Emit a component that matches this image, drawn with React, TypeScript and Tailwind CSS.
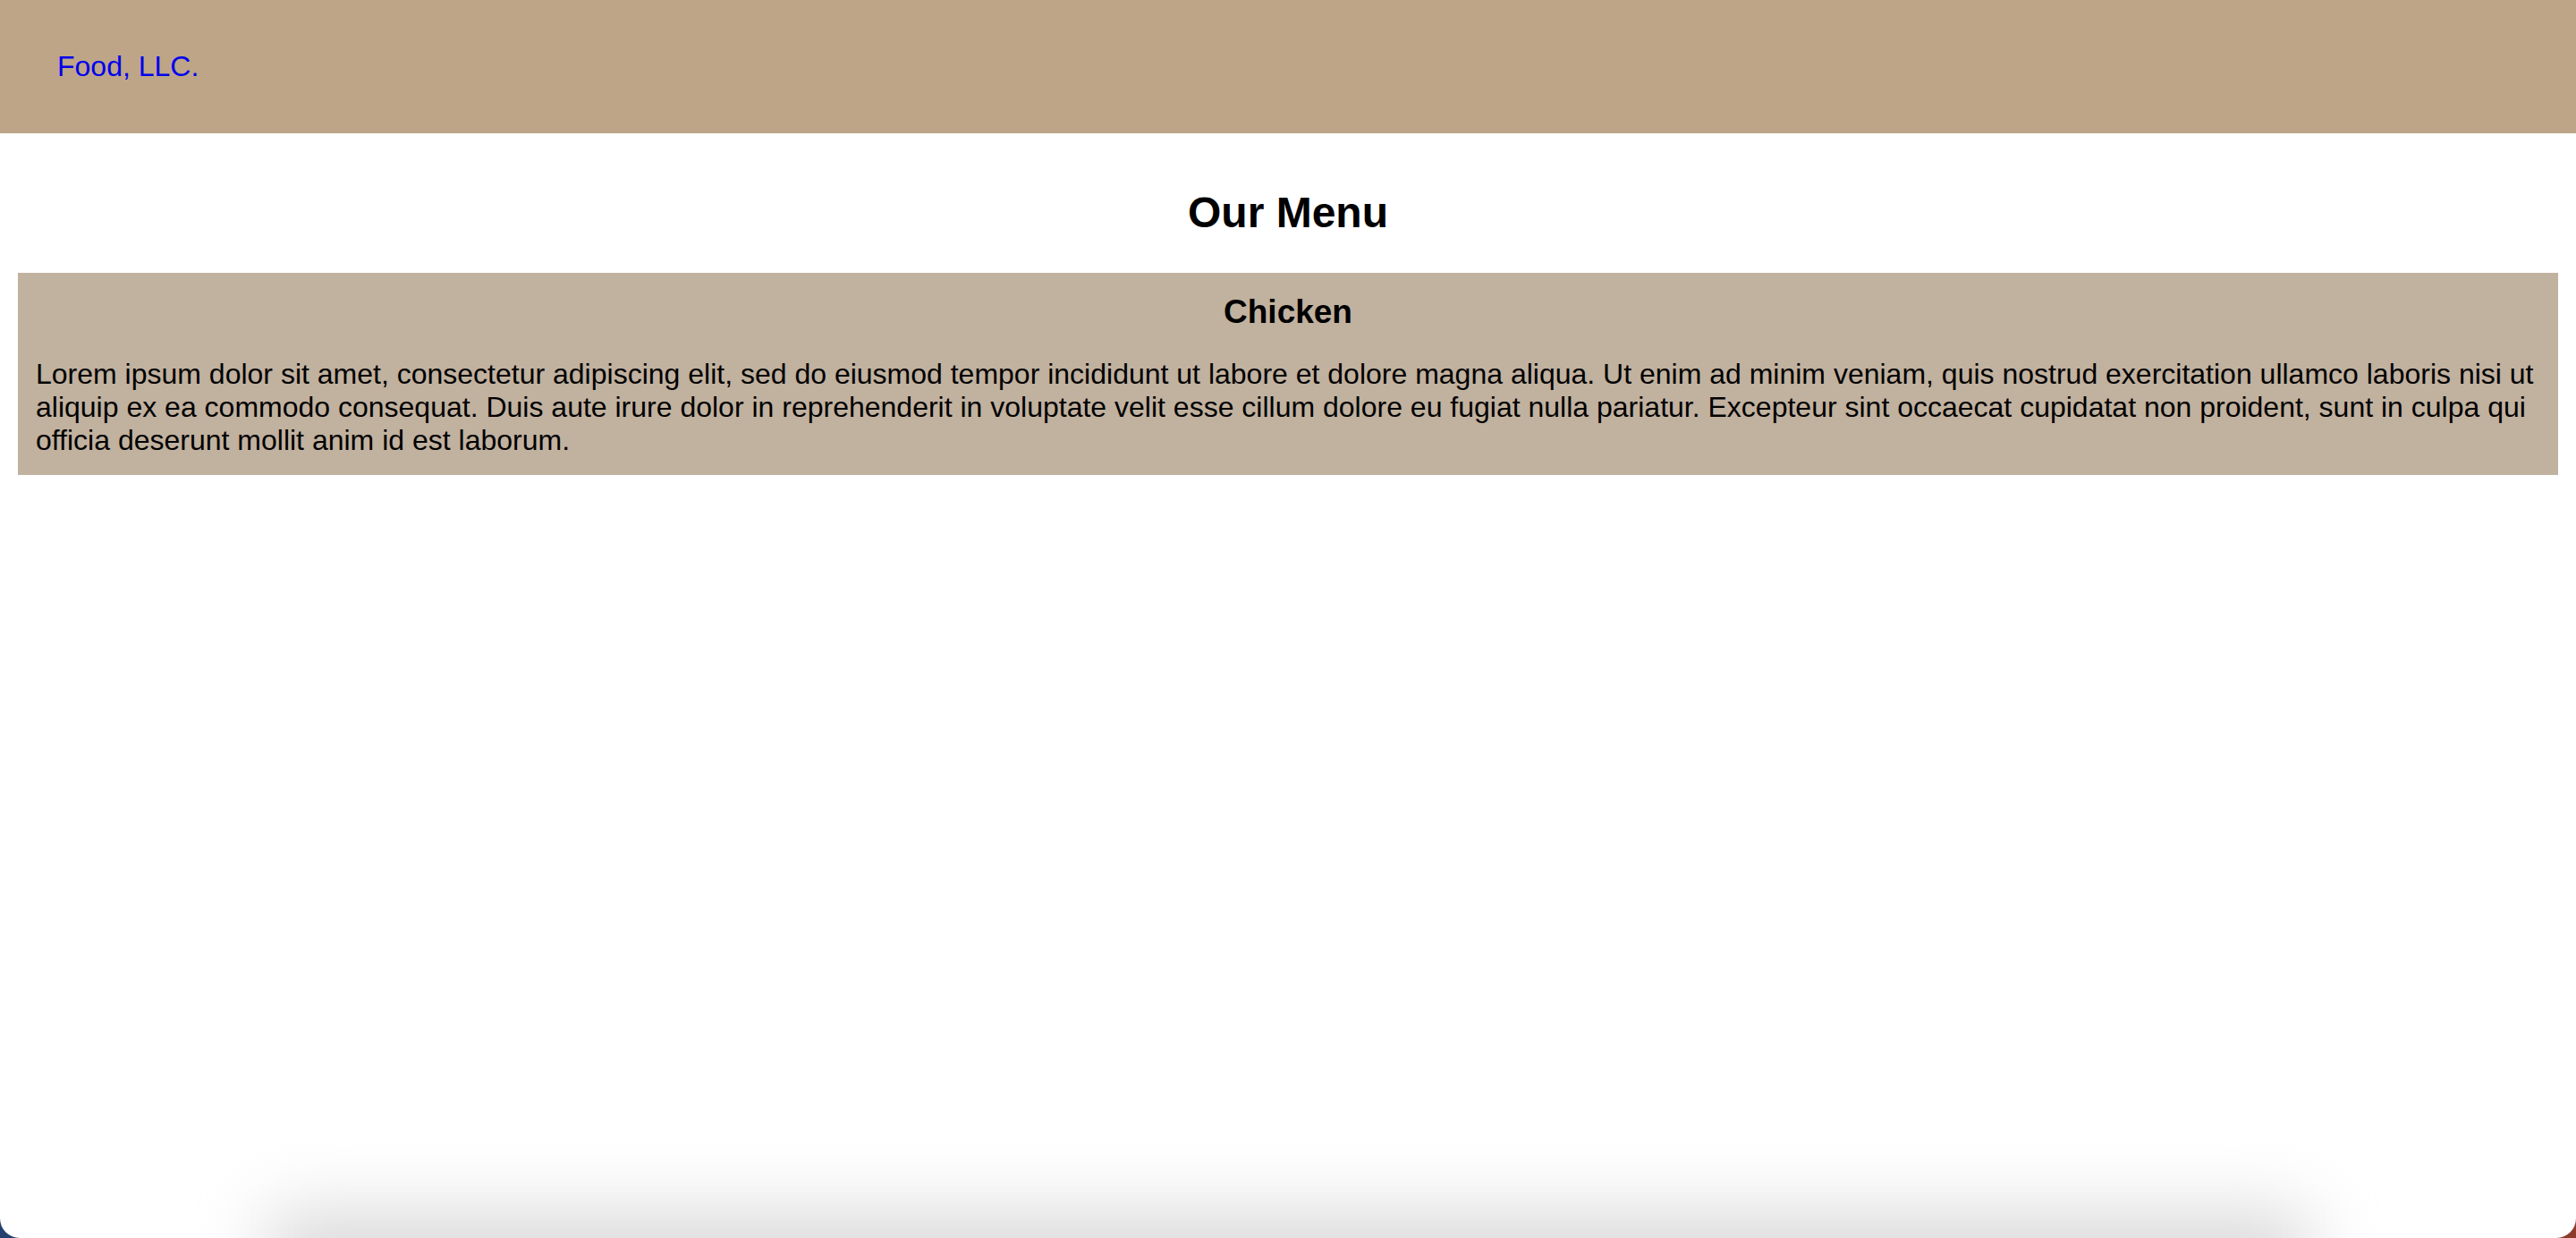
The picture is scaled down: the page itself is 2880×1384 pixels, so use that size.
export default function App() {
  return (
    <div className="h-screen w-full overflow-hidden bg-gradient-to-r from-[#23406e] to-[#8c3b2c]">
      <div
        className="relative h-full w-full overflow-hidden rounded-b-[22px] bg-white text-black"
        style={{ fontFamily: '"Liberation Sans", Arial, sans-serif' }}
      >
        {/* Header */}
        <header className="flex h-[149px] items-center bg-[#bea587] px-[64px]">
          <a className="text-[32px] leading-[37px] text-[#0000ee]">Food, LLC.</a>
        </header>

        {/* Menu */}
        <main className="px-[20px] pt-[61px]">
          <h2 className="text-center text-[48px] font-bold leading-[55px]">Our Menu</h2>
          <section className="mt-[40px] bg-[#c1b19f] px-[20px] pb-[20px] pt-[22px]">
            <h3 className="text-center text-[37px] font-bold leading-[43px]">Chicken</h3>
            <p className="mt-[30px] text-[32px] leading-[37px]">
              Lorem ipsum dolor sit amet, consectetur adipiscing elit, sed do eiusmod tempor incididunt ut labore et
              dolore magna aliqua. Ut enim ad minim veniam, quis nostrud exercitation ullamco laboris nisi ut aliquip ex
              ea commodo consequat. Duis aute irure dolor in reprehenderit in voluptate velit esse cillum dolore eu
              fugiat nulla pariatur. Excepteur sint occaecat cupidatat non proident, sunt in culpa qui officia deserunt
              mollit anim id est laborum.
            </p>
          </section>
        </main>

        {/* window shadow at the bottom */}
        <div className="pointer-events-none absolute bottom-[-80px] left-[300px] right-[300px] h-[110px] bg-[#d9d9d9] blur-[40px]" />
      </div>
    </div>
  );
}
